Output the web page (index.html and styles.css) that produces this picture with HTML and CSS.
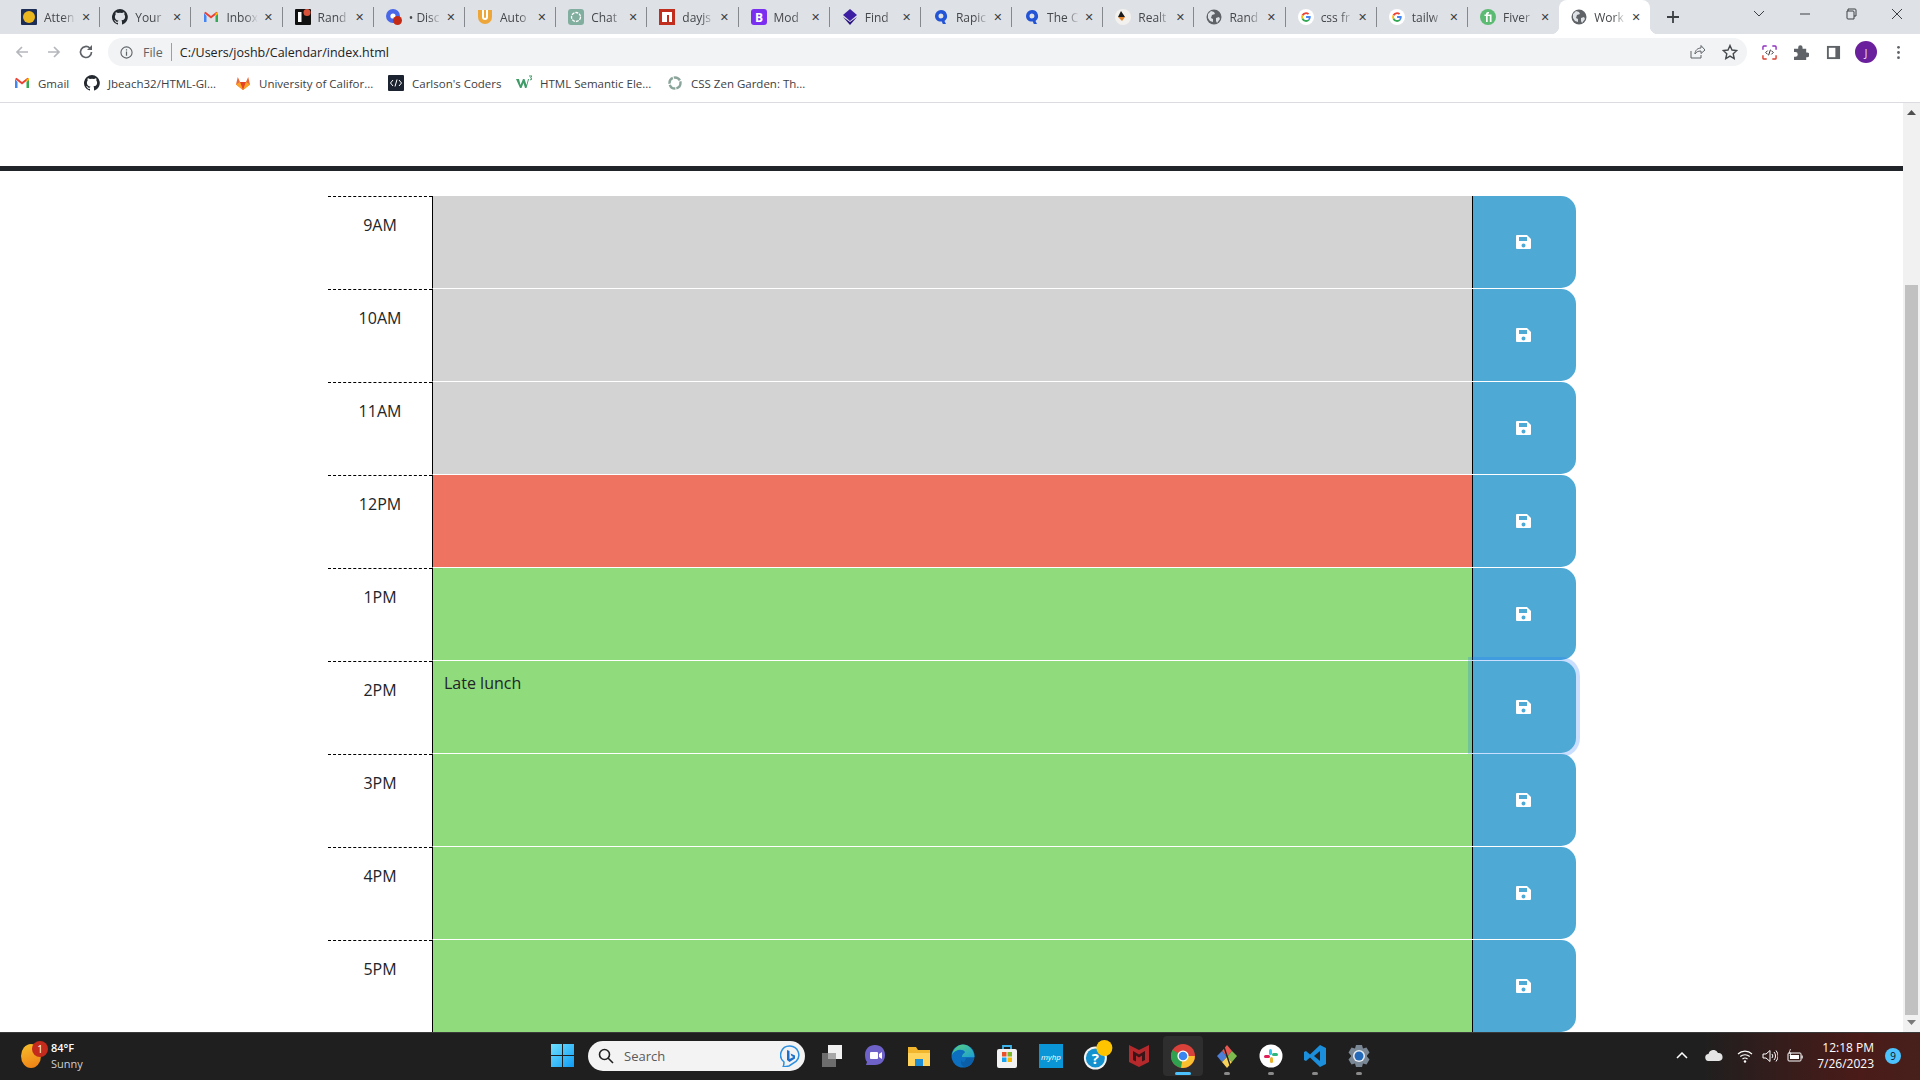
FILE: index.html
```html
<!DOCTYPE html>
<html lang="en">
<head>
<meta charset="utf-8">
<title>Work Day Scheduler</title>
<link rel="stylesheet" href="styles.css">
</head>
<body>
<svg class="defs" aria-hidden="true">
  <symbol id="globe" viewBox="0 0 16 16"><circle cx="8" cy="8" r="7.5" fill="#5f6368"/><path d="M2 5l3-3 3 1 1 2-3 1-1 3 2 1v3L4 12 2 9zM10 9l3-1 1 2-3 4-1-2z" fill="#dee1e6"/></symbol>
  <symbol id="goog" viewBox="0 0 16 16"><circle cx="8" cy="8" r="8" fill="#fff"/><path d="M8 3.200a4.800 4.800 0 0 1 3.200 1.200l-1.300 1.300A3 3 0 0 0 5.200 7L3.700 5.800A4.800 4.800 0 0 1 8 3.200z" fill="#ea4335"/><path d="M3.700 5.800 5.200 7a3 3 0 0 0 0 2L3.700 10.200a4.800 4.800 0 0 1 0-4.400z" fill="#fbbc05"/><path d="M3.700 10.200 5.200 9A3 3 0 0 0 10 10.400l1.400 1.100A4.800 4.800 0 0 1 3.700 10.200z" fill="#34a853"/><path d="M8.100 7.100h4.600a4.800 4.800 0 0 1-1.300 4.400L10 10.400a2 2 0 0 0 .8-1.500H8.100z" fill="#4285f4"/></symbol>
  <symbol id="ghub" viewBox="0 0 16 16"><path fill-rule="evenodd" d="M8 0a8 8 0 0 0-2.500 15.600c.4.100.5-.2.5-.4v-1.400c-2.200.5-2.700-1-2.700-1-.4-.9-.9-1.200-.9-1.200-.7-.5.100-.5.100-.5.800.1 1.200.8 1.200.8.700 1.200 1.900.9 2.300.7.100-.5.300-.9.500-1.100-1.800-.2-3.600-.9-3.600-4 0-.9.300-1.600.8-2.100-.1-.2-.4-1 .1-2.100 0 0 .7-.2 2.200.8a7.600 7.600 0 0 1 4 0c1.500-1 2.200-.8 2.200-.8.400 1.100.2 1.900.1 2.100.5.600.8 1.300.8 2.100 0 3.100-1.900 3.700-3.700 3.900.3.300.6.700.6 1.500v2.200c0 .2.100.5.600.4A8 8 0 0 0 8 0z" fill="#24292f"/></symbol>
  <symbol id="gmail" viewBox="0 0 16 16"><path d="M1 4v9h2.500V7z" fill="#4285f4"/><path d="M15 4v9h-2.500V7z" fill="#34a853"/><path d="M1 4l1.500-1.200L8 7l5.500-4.200L15 4 8 9.500z" fill="#ea4335"/><path d="M12.500 4.200 15 3v2l-2.500 2z" fill="#fbbc05"/></symbol>
  <symbol id="rapid" viewBox="0 0 16 16"><path fill-rule="evenodd" d="M8 1a6 6 0 0 1 3.500 10.900L13 15H9.800l-1-2.500C5 13 2 10.500 2 7a6 6 0 0 1 6-6zm0 3.500a2.500 2.500 0 1 0 0 5 2.500 2.500 0 0 0 0-5z" fill="#2454d6"/></symbol>
  <symbol id="save" viewBox="0 0 15 14"><path fill-rule="evenodd" d="M1 0h10l4 4v9a1 1 0 0 1-1 1H1a1 1 0 0 1-1-1V1a1 1 0 0 1 1-1zm2 2v4h8V2zm4.500 6.500a2 2 0 1 0 0 4 2 2 0 0 0 0-4z" fill="#fff"/></symbol>
</svg>

<header class="tabstrip">
  <div class="tab"><svg class="fav" viewBox="0 0 16 16"><rect width="16" height="16" rx="1" fill="#1c2d56"/><circle cx="8" cy="8" r="6" fill="#eab71e"/></svg><span class="tab-title">Atten</span><span class="tab-x">✕</span><i class="tab-sep"></i></div>
  <div class="tab"><svg class="fav"><use href="#ghub"/></svg><span class="tab-title">Your</span><span class="tab-x">✕</span><i class="tab-sep"></i></div>
  <div class="tab"><svg class="fav"><use href="#gmail"/></svg><span class="tab-title">Inbox</span><span class="tab-x">✕</span><i class="tab-sep"></i></div>
  <div class="tab"><svg class="fav" viewBox="0 0 16 16"><rect width="16" height="16" rx="1" fill="#111"/><rect x="3" y="3" width="3.500" height="10" fill="#fff"/><circle cx="12" cy="3.500" r="3.500" fill="#d9523a"/></svg><span class="tab-title">Rand</span><span class="tab-x">✕</span><i class="tab-sep"></i></div>
  <div class="tab"><svg class="fav" viewBox="0 0 16 16"><circle cx="7" cy="7" r="7" fill="#4a67e8"/><circle cx="7" cy="7" r="2.600" fill="#fff"/><circle cx="11.500" cy="11.500" r="4.500" fill="#c42b16"/></svg><span class="tab-title">• Disc</span><span class="tab-x">✕</span><i class="tab-sep"></i></div>
  <div class="tab"><svg class="fav" viewBox="0 0 16 16"><path d="M1 1h14v7a7 7 0 0 1-14 0z" fill="#eda63a"/><path d="M5 1h2v7a1 1 0 0 0 2 0V1h2v7a3 3 0 0 1-6 0z" fill="#fff"/></svg><span class="tab-title">Auto</span><span class="tab-x">✕</span><i class="tab-sep"></i></div>
  <div class="tab"><svg class="fav" viewBox="0 0 16 16"><rect width="16" height="16" rx="3" fill="#82ae9f"/><circle cx="8" cy="8" r="4.500" fill="none" stroke="#fff" stroke-width="1.300" stroke-dasharray="3 1"/></svg><span class="tab-title">Chat</span><span class="tab-x">✕</span><i class="tab-sep"></i></div>
  <div class="tab"><svg class="fav" viewBox="0 0 16 16"><rect width="16" height="16" fill="#c12e1e"/><path d="M3 3h10v10h-3V6H8v7H3z" fill="#fff"/></svg><span class="tab-title">dayjs</span><span class="tab-x">✕</span><i class="tab-sep"></i></div>
  <div class="tab"><svg class="fav" viewBox="0 0 16 16"><rect width="16" height="16" rx="3" fill="#7a2ff0"/><text x="8" y="12.500" class="fav-letter">B</text></svg><span class="tab-title">Mod</span><span class="tab-x">✕</span><i class="tab-sep"></i></div>
  <div class="tab"><svg class="fav" viewBox="0 0 16 16"><path d="M8 0l7 6-7 6-7-6z" fill="#3d1fa3"/><path d="M1 8l7 8 7-8-7 5z" fill="#2b1480"/></svg><span class="tab-title">Find</span><span class="tab-x">✕</span><i class="tab-sep"></i></div>
  <div class="tab"><svg class="fav"><use href="#rapid"/></svg><span class="tab-title">Rapic</span><span class="tab-x">✕</span><i class="tab-sep"></i></div>
  <div class="tab"><svg class="fav"><use href="#rapid"/></svg><span class="tab-title">The C</span><span class="tab-x">✕</span><i class="tab-sep"></i></div>
  <div class="tab"><svg class="fav" viewBox="0 0 16 16"><circle cx="8" cy="8" r="8" fill="#f3f1ee"/><path d="M6 2l4 6H3z" fill="#1b1b1b"/><path d="M3 8h7l-3 4z" fill="#e2842b"/></svg><span class="tab-title">Realt</span><span class="tab-x">✕</span><i class="tab-sep"></i></div>
  <div class="tab"><svg class="fav"><use href="#globe"/></svg><span class="tab-title">Rand</span><span class="tab-x">✕</span><i class="tab-sep"></i></div>
  <div class="tab"><svg class="fav"><use href="#goog"/></svg><span class="tab-title">css fr</span><span class="tab-x">✕</span><i class="tab-sep"></i></div>
  <div class="tab"><svg class="fav"><use href="#goog"/></svg><span class="tab-title">tailw</span><span class="tab-x">✕</span><i class="tab-sep"></i></div>
  <div class="tab tab-last"><svg class="fav" viewBox="0 0 16 16"><circle cx="8" cy="8" r="8" fill="#5cbb73"/><path d="M6 13V7H4.500V5.500H6V5a2 2 0 0 1 2-2h1v1.500H8.500c-.5 0-.8.300-.8 1h3.800V13H9.800V7H7.700v6z" fill="#fff"/></svg><span class="tab-title">Fiver</span><span class="tab-x">✕</span></div>
  <div class="tab tab-active"><svg class="fav"><use href="#globe"/></svg><span class="tab-title">Work</span><span class="tab-x">✕</span></div>
  <span class="newtab">
    <svg width="14" height="14" viewBox="0 0 14 14"><path d="M7 1v12M1 7h12" stroke="#3c4043" stroke-width="1.800"/></svg>
  </span>
  <div class="winctl">
    <svg width="12" height="8" viewBox="0 0 12 8"><path d="M1 1l5 5 5-5" fill="none" stroke="#3c4043"/></svg>
    <svg width="12" height="12" viewBox="0 0 12 12"><path d="M1 6h10" stroke="#3c4043"/></svg>
    <svg width="12" height="12" viewBox="0 0 12 12"><path d="M3 3V1h7a1 1 0 0 1 1 1v6H9M2 3h6a1 1 0 0 1 1 1v7H3a1 1 0 0 1-1-1z" fill="none" stroke="#3c4043"/></svg>
    <svg width="12" height="12" viewBox="0 0 12 12"><path d="M1 1l10 10M11 1L1 11" stroke="#3c4043"/></svg>
  </div>
</header>

<nav class="toolbar">
  <svg class="nav-icon" viewBox="0 0 16 16"><path d="M14 8H3M8 3L3 8l5 5" fill="none" stroke="#b4b7bb" stroke-width="1.700"/></svg>
  <svg class="nav-icon" viewBox="0 0 16 16"><path d="M2 8h11M8 3l5 5-5 5" fill="none" stroke="#b4b7bb" stroke-width="1.700"/></svg>
  <svg class="nav-icon" viewBox="0 0 16 16"><path d="M13.500 8A5.500 5.500 0 1 1 11.800 4" fill="none" stroke="#5f6368" stroke-width="1.700"/><path d="M14 1v5H9z" fill="#5f6368"/></svg>
  <div class="omnibox">
    <svg class="info" viewBox="0 0 14 14"><circle cx="7" cy="7" r="6" fill="none" stroke="#5f6368" stroke-width="1.200"/><path d="M7 6v4.500M7 3.500v1.300" stroke="#5f6368" stroke-width="1.300"/></svg>
    <span class="scheme">File</span>
    <i class="omni-sep"></i>
    <span class="url">C:/Users/joshb/Calendar/index.html</span>
    <svg class="omni-share" viewBox="0 0 16 16"><path d="M2 7v7h10v-3M6 10c0-4 3-6 6-6V1.500L16 6l-4 3.500V7c-3 0-5 1-6 3z" fill="none" stroke="#5f6368"/></svg>
    <svg class="omni-star" viewBox="0 0 16 16"><path d="M8 1.500l2 4.500 4.800.5-3.600 3.200 1 4.800L8 12.100l-4.200 2.400 1-4.800L1.200 6.500 6 6z" fill="none" stroke="#45484c" stroke-width="1.400"/></svg>
  </div>
  <div class="tool-icons">
    <svg class="tool" viewBox="0 0 16 16"><path d="M1 5V2a1 1 0 0 1 1-1h3M11 1h3a1 1 0 0 1 1 1v3" fill="none" stroke="#8f2fbf" stroke-width="1.500"/><path d="M1 11v3a1 1 0 0 0 1 1h3M11 15h3a1 1 0 0 0 1-1v-3" fill="none" stroke="#d8402f" stroke-width="1.500"/><path d="M6 6L4 8l2 2M10 6l2 2-2 2M9 5l-2 6" fill="none" stroke="#222"/></svg>
    <svg class="tool" viewBox="0 0 16 16"><path d="M0 4h4.500V2.500a2.300 2.300 0 0 1 4.600 0V4H13v4h1a2.500 2.500 0 0 1 0 5h-1v3H0v-3.500h1.500a2.500 2.500 0 0 0 0-5H0z" fill="#5f6368"/></svg>
    <svg class="tool" viewBox="0 0 16 16"><path d="M1 1h14v14H1z" fill="#5f6368"/><path d="M3 3h7v10H3z" fill="#fff"/></svg>
    <span class="avatar">J</span>
    <svg class="tool dots" viewBox="0 0 4 16"><circle cx="2" cy="2.500" r="1.500" fill="#5f6368"/><circle cx="2" cy="8" r="1.500" fill="#5f6368"/><circle cx="2" cy="13.500" r="1.500" fill="#5f6368"/></svg>
  </div>
</nav>

<nav class="bookmarks">
  <span class="bm bm-gmail"><svg class="fav"><use href="#gmail"/></svg>Gmail</span>
  <span class="bm bm-git"><svg class="fav"><use href="#ghub"/></svg>Jbeach32/HTML-Gl...</span>
  <span class="bm bm-uc"><svg class="fav" viewBox="0 0 16 16"><path d="M8 15L1 9.500 2.800 2 5 7h6l2.200-5L15 9.500z" fill="#e8693a"/><path d="M8 15L5 7h6z" fill="#e24329"/><path d="M1 9.500L5 7l3 8zM15 9.500L11 7l-3 8z" fill="#fca326"/></svg>University of Califor...</span>
  <span class="bm bm-cc"><svg class="fav" viewBox="0 0 16 16"><rect width="16" height="16" rx="1" fill="#1b2230"/><path d="M5 5L2.500 8 5 11M11 5l2.500 3L11 11M9 4.500l-2 7" fill="none" stroke="#fff"/></svg>Carlson's Coders</span>
  <span class="bm bm-w3"><svg class="fav" viewBox="0 0 16 16"><path d="M0 4h3l1.500 6L7 4h1.500l2 6L12 4h1l-2.500 9H9L7.500 8 5.500 13H4z" fill="#3f9b68"/><path d="M13 1h3l-1.500 2 1.500 1-2 1" fill="none" stroke="#3f9b68"/></svg>HTML Semantic Ele...</span>
  <span class="bm"><svg class="fav" viewBox="0 0 16 16"><circle cx="8" cy="8" r="5.500" fill="none" stroke="#8aa49a" stroke-width="2.400" stroke-dasharray="7 1"/></svg>CSS Zen Garden: Th...</span>
</nav>

<div class="viewport">
  <main class="page">
    <div class="bar"></div>
    <section class="schedule">
      <div class="row"><div class="hour">9AM</div><textarea class="entry past"></textarea><button class="save"><svg class="save-icon"><use href="#save"/></svg></button></div>
      <div class="row"><div class="hour">10AM</div><textarea class="entry past"></textarea><button class="save"><svg class="save-icon"><use href="#save"/></svg></button></div>
      <div class="row"><div class="hour">11AM</div><textarea class="entry past"></textarea><button class="save"><svg class="save-icon"><use href="#save"/></svg></button></div>
      <div class="row"><div class="hour">12PM</div><textarea class="entry present"></textarea><button class="save"><svg class="save-icon"><use href="#save"/></svg></button></div>
      <div class="row"><div class="hour">1PM</div><textarea class="entry future"></textarea><button class="save"><svg class="save-icon"><use href="#save"/></svg></button></div>
      <div class="row"><div class="hour">2PM</div><textarea class="entry future">Late lunch</textarea><button class="save save-focus"><svg class="save-icon"><use href="#save"/></svg></button></div>
      <div class="row"><div class="hour">3PM</div><textarea class="entry future"></textarea><button class="save"><svg class="save-icon"><use href="#save"/></svg></button></div>
      <div class="row"><div class="hour">4PM</div><textarea class="entry future"></textarea><button class="save"><svg class="save-icon"><use href="#save"/></svg></button></div>
      <div class="row"><div class="hour">5PM</div><textarea class="entry future"></textarea><button class="save"><svg class="save-icon"><use href="#save"/></svg></button></div>
    </section>
  </main>
  <aside class="scrollbar">
    <svg class="arrow arrow-up" viewBox="0 0 9 5"><path d="M4.500 0L9 5H0z" fill="#505050"/></svg>
    <div class="thumb"></div>
    <svg class="arrow arrow-down" viewBox="0 0 9 5"><path d="M0 0h9L4.500 5z" fill="#7a7a7a"/></svg>
  </aside>
</div>

<footer class="taskbar">
  <div class="weather">
    <span class="sun"><span class="sun-badge">1</span></span>
    <span class="weather-text"><b>84°F</b><span>Sunny</span></span>
  </div>
  <svg class="winlogo" viewBox="0 0 23 23"><defs><linearGradient id="wl" x1="0" y1="0" x2="1" y2="1"><stop offset="0" stop-color="#6fe0ff"/><stop offset="1" stop-color="#0f9bf5"/></linearGradient></defs><path d="M0 0h11v11H0zM12 0h11v11H12zM0 12h11v11H0zM12 12h11v11H12z" fill="url(#wl)"/></svg>
  <div class="search">
    <svg class="search-glass" viewBox="0 0 16 16"><circle cx="6.500" cy="6.500" r="5" fill="none" stroke="#202020" stroke-width="1.600"/><path d="M10 10l5 5" stroke="#202020" stroke-width="1.600"/></svg>
    <span class="search-text">Search</span>
    <svg class="search-bing" viewBox="0 0 20 22"><path d="M10 1a9 9 0 0 1 6 15.500L9 21l-6 1c1-2 1-3.500 1-5a9 9 0 0 1 6-16z" fill="none" stroke="#2a8fe0" stroke-width="1.500"/><path d="M7 5l2.500 1v8l4-2-2-1-1-2.500 4.500 2v3L9.500 17 7 15z" fill="#1d6fc9"/></svg>
  </div>
  <div class="apps">
    <span class="app"><svg viewBox="0 0 24 24"><rect x="9" y="1" width="14" height="14" fill="#f1f1f1"/><rect x="3" y="9" width="14" height="14" fill="#6d6d6d"/><rect x="9" y="9" width="8" height="6" fill="#a8a8a8"/></svg></span>
    <span class="app"><svg viewBox="0 0 24 24"><path d="M12 1c6 0 10 4 10 10s-4 10-10 10H3l1-3c-1.500-2-2-4.500-2-7C2 5 6 1 12 1z" fill="#6e62c9"/><rect x="7" y="8" width="8" height="7" rx="1" fill="#fff"/><path d="M16 10l3-2v7l-3-2z" fill="#fff"/></svg></span>
    <span class="app"><svg viewBox="0 0 24 24"><path d="M1 3h8l2 3h12v16H1z" fill="#f2b52e"/><path d="M1 9h22v13H1z" fill="#ffd35c"/><rect x="8" y="15" width="8" height="7" fill="#1d8dd6"/></svg></span>
    <span class="app"><svg viewBox="0 0 24 24"><defs><linearGradient id="ed" x1="0" y1="0" x2="1" y2="1"><stop offset="0" stop-color="#5ad07a"/><stop offset="1" stop-color="#1b9fd6"/></linearGradient></defs><circle cx="12" cy="12" r="11.500" fill="#0c6fc0"/><path d="M1 11C2 5 7 .5 12 .5S23 5 23.500 13H11c0-3 3-4 3-5C12 4.500 4 5 1 11z" fill="url(#ed)"/><path d="M15 14h8c-1 4-3 8-8 9-5 0-6-5-4-7 0 3 3 3 4-2z" fill="#0b5fa8"/></svg></span>
    <span class="app"><svg viewBox="0 0 24 24"><path d="M8 6V2h8v4" fill="none" stroke="#3db4ec" stroke-width="1.800"/><rect x="2" y="5" width="20" height="19" rx="2" fill="#f2f2f2"/><rect x="7" y="8" width="4.500" height="4.500" fill="#e8522a"/><rect x="12.500" y="8" width="4.500" height="4.500" fill="#7db82a"/><rect x="7" y="13.500" width="4.500" height="4.500" fill="#1aa4ef"/><rect x="12.500" y="13.500" width="4.500" height="4.500" fill="#fbb800"/></svg></span>
    <span class="app"><svg viewBox="0 0 24 24"><rect width="24" height="24" fill="#0a96d6"/><text x="12" y="15.500" class="myhp">myhp</text></svg></span>
    <span class="app"><svg class="icon-over" viewBox="0 0 24 24"><circle cx="12.400" cy="14" r="11.500" fill="#f2f2f2"/><circle cx="12.400" cy="14" r="9.500" fill="#1492cf"/><text x="12.400" y="19.500" class="help">?</text><circle cx="21.400" cy="4" r="8" fill="#ffc400"/></svg></span>
    <span class="app"><svg viewBox="0 0 24 24"><path d="M2 1l10 5 10-5v17l-10 5-10-5z" fill="#b5292c"/><path d="M6 7l6 3.500L18 7v9l-3 1.500v-6l-3 2-3-2v6L6 16z" fill="#3a1416"/></svg></span>
    <span class="app app-active"><svg viewBox="0 0 24 24"><circle cx="12" cy="12" r="12" fill="#d8413a"/><path d="M12 12L1.500 6A12 12 0 0 0 10 23.800z" fill="#30a14e"/><path d="M12 12H23.900A12 12 0 0 1 10 23.800z" fill="#fbc02d"/><circle cx="12" cy="12" r="5.600" fill="#fff"/><circle cx="12" cy="12" r="4.300" fill="#3a86f0"/></svg><i class="app-line"></i></span>
    <span class="app app-open"><svg viewBox="0 0 24 24"><path d="M12 1l5 6-5 6-5-6z" fill="#e8574f"/><path d="M2 12l5-5 5 6-5 5z" fill="#4e7fd6"/><path d="M22 12l-5-5-5 6 5 5z" fill="#7dbb4f"/><path d="M7 18l5-5 5 5-5 6z" fill="#f7d35a"/><path d="M9 3l6 18" stroke="#222" stroke-width="1.400"/></svg><i class="app-dot"></i></span>
    <span class="app app-open"><svg viewBox="0 0 24 24"><circle cx="12" cy="12" r="11.500" fill="#fff"/><rect x="10" y="5" width="3" height="6" rx="1.500" fill="#36c5f0"/><rect x="13" y="9" width="6" height="3" rx="1.500" fill="#2eb67d"/><rect x="11" y="13" width="3" height="6" rx="1.500" fill="#ecb22e"/><rect x="5" y="11" width="6" height="3" rx="1.500" fill="#e01e5a"/></svg><i class="app-dot"></i></span>
    <span class="app app-open"><svg viewBox="0 0 24 24"><path d="M17 1l6 3v16l-6 3L7 13.500 3 17l-2-1V8l2-1 4 3.500z" fill="#1b8fdc"/><path d="M17 7l-6 5 6 5z" fill="#202020"/></svg><i class="app-dot"></i></span>
    <span class="app app-open"><svg viewBox="0 0 24 24"><path d="M9 1h6l1 3.500 3.500-1 3 5-2.500 3v1l2.500 3-3 5-3.500-1-1 3.500H9l-1-3.500-3.500 1-3-5L4 12.500v-1l-2.500-3 3-5 3.500 1z" fill="#7a8794"/><circle cx="12" cy="12" r="6" fill="#e8edf2"/><circle cx="12" cy="12" r="4.500" fill="#2468b8"/></svg><i class="app-dot"></i></span>
  </div>
  <div class="tray">
    <svg class="tray-caret" viewBox="0 0 12 7"><path d="M1 6l5-5 5 5" fill="none" stroke="#fff" stroke-width="1.500"/></svg>
    <svg class="tray-cloud" viewBox="0 0 18 11"><path d="M4 11a3.500 3.500 0 0 1-.5-7A5 5 0 0 1 13 3a4 4 0 0 1 1 8z" fill="#e4e4e4"/></svg>
    <svg class="tray-icon" viewBox="0 0 16 14"><path d="M1 5a10 10 0 0 1 14 0M3.300 7.500a7 7 0 0 1 9.400 0M5.500 10a4 4 0 0 1 5 0" fill="none" stroke="#fff" stroke-width="1.100"/><circle cx="8" cy="12.500" r="1.200" fill="#fff"/></svg>
    <svg class="tray-icon" viewBox="0 0 16 14"><path d="M1 5h3l4-3.500v11L4 9H1z" fill="none" stroke="#fff"/><path d="M10 5a3 3 0 0 1 0 4M12 3a6 6 0 0 1 0 8M14 1.500a9 9 0 0 1 0 11" fill="none" stroke="#fff"/></svg>
    <svg class="tray-icon" viewBox="0 0 16 14"><rect x="1" y="4" width="13" height="8" rx="1" fill="none" stroke="#fff"/><rect x="3" y="6" width="9" height="4" fill="#fff"/><rect x="14.500" y="6.500" width="1.200" height="3" fill="#fff"/><path d="M3.500 0L2 4h2L3 7" fill="none" stroke="#fff" stroke-width=".8"/></svg>
    <div class="clock"><span>12:18 PM</span><span>7/26/2023</span></div>
    <span class="notif">9</span>
  </div>
</footer>
</body>
</html>
```
FILE: styles.css
```css
* { box-sizing: border-box; }
html, body { margin: 0; height: 100%; }
body {
  width: 1920px;
  height: 1080px;
  display: flex;
  flex-direction: column;
  overflow: hidden;
  background: #fff;
  font-family: "Open Sans", "Noto Sans", sans-serif;
  color: #212529;
}
.defs { display: none; }
.fav { width: 16px; height: 16px; flex: none; }
.fav-letter { font: 700 12px "Open Sans", sans-serif; fill: #fff; text-anchor: middle; }

/* tabs */
.tabstrip {
  height: 34px;
  flex: none;
  display: flex;
  align-items: stretch;
  padding-left: 9px;
  background: #dee1e6;
}
.tab {
  position: relative;
  width: 91.2px;
  flex: none;
  display: flex;
  align-items: center;
  padding-left: 12px;
  font-size: 12px;
  color: #45474a;
}
.tab-title {
  width: 32px;
  margin-left: 7px;
  overflow: hidden;
  white-space: nowrap;
  -webkit-mask-image: linear-gradient(90deg, #000 60%, transparent);
  mask-image: linear-gradient(90deg, #000 60%, transparent);
}
.tab-x { width: 12px; margin-left: 4px; font-size: 11px; font-family: "DejaVu Sans", sans-serif; color: #3c4043; text-align: center; }
.tab-sep { width: 1px; height: 20px; margin-left: auto; background: #85888d; }
.tab-active { background: #fff; border-radius: 8px 8px 0 0; }
.tab-active::before, .tab-active::after {
  content: "";
  position: absolute;
  bottom: 0;
  width: 8px;
  height: 8px;
}
.tab-active::before { left: -8px; background: radial-gradient(circle at 0 0, transparent 8px, #fff 8.5px); }
.tab-active::after { right: -8px; background: radial-gradient(circle at 100% 0, transparent 8px, #fff 8.5px); }
.newtab { width: 45px; flex: none; display: flex; align-items: center; justify-content: center; }
.winctl { flex: 1; display: flex; align-items: center; gap: 34px; padding: 0 0 6px 58px; }

/* toolbar */
.toolbar { height: 34px; flex: none; display: flex; align-items: center; padding: 2px 0 0 14px; background: #fff; }
.nav-icon { width: 16px; height: 16px; margin-right: 16px; flex: none; }
.omnibox {
  width: 1639px;
  height: 28px;
  margin-left: -2px;
  flex: none;
  display: flex;
  align-items: center;
  padding: 0 9px 0 12px;
  border-radius: 14px;
  background: #f1f3f4;
  font-size: 12.5px;
}
.info { width: 13px; height: 13px; margin-right: 10px; flex: none; }
.scheme { color: #5f6368; }
.omni-sep { width: 1px; height: 18px; margin: 0 8px 0 8px; background: #9aa0a6; }
.url { color: #202124; }
.omni-share { width: 16px; height: 16px; margin-left: auto; }
.omni-star { width: 16px; height: 16px; margin-left: 17px; }
.tool-icons { display: flex; align-items: center; padding-left: 15px; }
.tool { width: 15px; height: 15px; margin-right: 17px; flex: none; }
.avatar {
  width: 22px;
  height: 22px;
  margin-right: 19px;
  margin-left: -3px;
  flex: none;
  display: flex;
  align-items: center;
  justify-content: center;
  border-radius: 50%;
  background: #6a1f9c;
  color: #e9d9f2;
  font-size: 11px;
}
.dots { width: 5px; }

/* bookmarks */
.bookmarks {
  height: 35px;
  flex: none;
  display: flex;
  align-items: center;
  padding: 0 0 4px 14px;
  border-bottom: 1px solid #dadce0;
  font-size: 11.5px;
  color: #3c4043;
  white-space: nowrap;
}
.bm { display: flex; align-items: center; gap: 8px; flex: none; }
.bm-gmail { width: 70px; }
.bm-git { width: 151px; }
.bm-uc { width: 153px; }
.bm-cc { width: 128px; }
.bm-w3 { width: 151px; }

/* page */
.viewport { flex: 1; min-height: 0; display: flex; }
.page { flex: 1; min-width: 0; overflow: hidden; padding-top: 63px; background: #fff; }
.bar { height: 5px; background: #212529; }
.schedule { margin: 25px 0 0 328px; width: 1248px; }
.row { display: grid; grid-template-columns: 104px 1040px 104px; height: 93px; }
.hour {
  border-top: 1px dashed #000;
  padding: 16px 0 0 0;
  text-align: center;
  font-size: 16px;
  line-height: 24px;
  color: #212529;
}
.entry {
  display: block;
  width: 100%;
  height: 93px;
  margin: 0;
  padding: 10px 11px 0;
  resize: none;
  outline: none;
  border: 0;
  border-left: 1px solid #000;
  border-bottom: 1px solid #fff;
  font: 16px/24px "Open Sans", "Noto Sans", sans-serif;
  color: #212529;
}
.past { background: #d3d3d3; }
.present { background: #ee7361; }
.future { background: #90db7b; }
.save {
  height: 92px;
  padding: 0 2px 0 0;
  display: flex;
  align-items: center;
  justify-content: center;
  border: 0;
  border-left: 1px solid #000;
  border-radius: 0 15px 15px 0;
  background: #4fa9d5;
}
.save-focus { box-shadow: 0 0 0 4px rgba(13, 110, 253, .22); }
.save-icon { width: 15px; height: 14px; }

/* scrollbar */
.scrollbar { width: 17px; flex: none; display: flex; flex-direction: column; align-items: center; background: #f1f1f1; }
.arrow { width: 9px; height: 5px; flex: none; }
.arrow-up { margin: 7px 0 5px; }
.arrow-down { margin: 5px 0 7px; }
.thumb { width: 13px; flex: 1; margin-top: 165px; background: #c1c1c1; }

/* taskbar */
.taskbar {
  height: 48px;
  flex: none;
  display: flex;
  align-items: center;
  padding-bottom: 2px;
  border-top: 1px solid #3a3a3a;
  background: linear-gradient(90deg, #1f1f1f 0, #1f1f1f 1700px, #4a1b18 1860px, #47201c 100%);
  color: #fff;
}
.weather { width: 551px; flex: none; display: flex; align-items: center; padding-left: 21px; }
.sun {
  position: relative;
  width: 20px;
  height: 24px;
  flex: none;
  border-radius: 50%;
  background: linear-gradient(160deg, #f6c02c, #ef7d14);
}
.sun-badge {
  position: absolute;
  top: -3px;
  right: -7px;
  width: 16px;
  height: 16px;
  border-radius: 50%;
  background: #c42b1c;
  font-size: 10px;
  line-height: 16px;
  text-align: center;
}
.weather-text { display: flex; flex-direction: column; margin-left: 10px; font-size: 11px; line-height: 16px; }
.weather-text b { font-weight: 600; }
.weather-text span { color: #cfcfcf; }
.winlogo { width: 23px; height: 23px; flex: none; }
.search {
  width: 217px;
  height: 30px;
  margin-left: 14px;
  flex: none;
  display: flex;
  align-items: center;
  padding: 0 5px 0 10px;
  border-radius: 15px;
  background: #f3f3f3;
  font-size: 13px;
  color: #5a5a5a;
}
.search-glass { width: 16px; height: 16px; flex: none; }
.search-text { margin-left: 10px; }
.search-bing { width: 20px; height: 22px; margin-left: auto; }
.apps { display: flex; margin-left: 4px; flex: none; }
.app {
  position: relative;
  width: 44px;
  height: 40px;
  flex: none;
  display: flex;
  align-items: center;
  justify-content: center;
}
.app svg { width: 24px; height: 24px; }
.app .icon-over { overflow: visible; }
.app-active { width: 40px; margin: 0 2px; border-radius: 4px; background: #2e2e2e; }
.app-line { position: absolute; left: 12px; bottom: 1px; width: 16px; height: 3px; border-radius: 2px; background: #4cc2ff; }
.app-dot { position: absolute; left: 19px; bottom: 1px; width: 6px; height: 3px; border-radius: 2px; background: #8a8a8a; }
.myhp { font: italic 8px "Open Sans", sans-serif; fill: #fff; text-anchor: middle; }
.help { font: 700 15px "Open Sans", sans-serif; fill: #fff; text-anchor: middle; }
.tray { flex: 1; display: flex; align-items: center; padding-left: 295px; }
.tray-caret { width: 12px; height: 7px; flex: none; }
.tray-cloud { width: 18px; height: 11px; margin-left: 17px; flex: none; }
.tray-icon { width: 16px; height: 14px; margin-left: 9px; flex: none; }
.tray-cloud + .tray-icon { margin-left: 14px; }
.clock { display: flex; flex-direction: column; align-items: flex-end; width: 62px; margin-left: 9px; font-size: 12px; line-height: 16px; }
.notif {
  width: 16px;
  height: 16px;
  margin-left: 11px;
  flex: none;
  border-radius: 50%;
  background: #4cc2ff;
  color: #111;
  font-size: 10px;
  line-height: 16px;
  text-align: center;
}
```
